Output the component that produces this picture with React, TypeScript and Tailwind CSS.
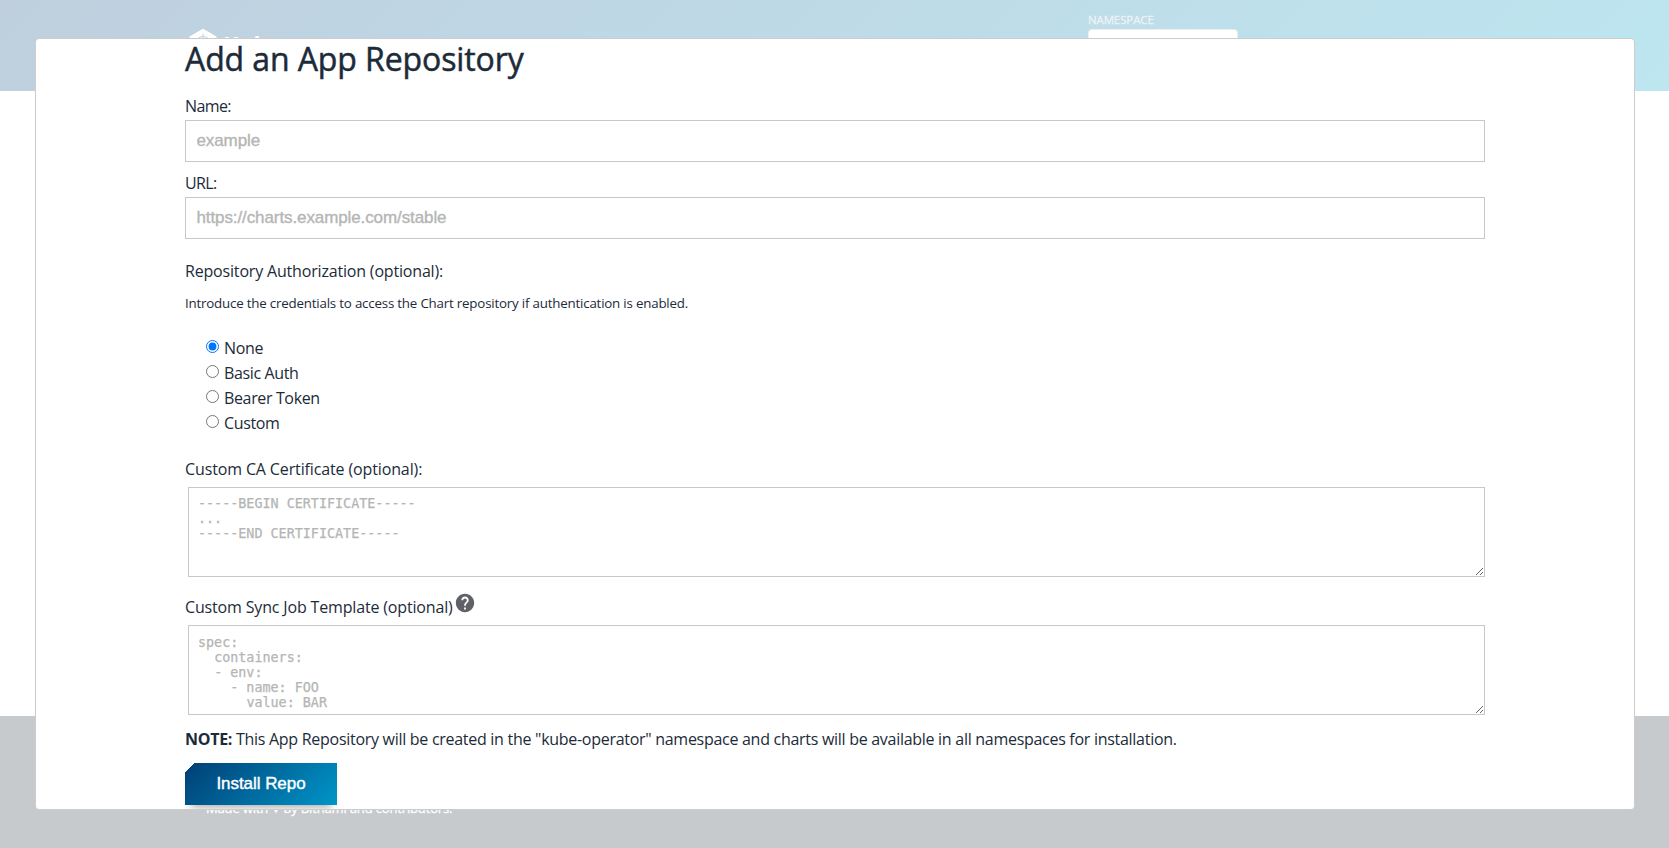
import { useState } from "react";
import type { ReactNode } from "react";
import { MdHelp } from "react-icons/md";

const AUTH_METHODS = ["None", "Basic Auth", "Bearer Token", "Custom"];

const CERT_HINT = "-----BEGIN CERTIFICATE-----\n...\n-----END CERTIFICATE-----";
const SYNC_HINT =
  "spec:\n  containers:\n  - env:\n    - name: FOO\n      value: BAR";

function Label({ className, children }: { className: string; children: ReactNode }) {
  return <div className={`flex h-6 text-[16px] leading-6 ${className}`}>{children}</div>;
}

function TextInput({ placeholder }: { placeholder: string }) {
  return (
    <input
      type="text"
      placeholder={placeholder}
      className="mt-0.5 block h-[42px] w-full border border-[#c8c8c8] bg-white px-[10.5px] font-['Liberation_Sans',Arial,sans-serif] text-[17px] tracking-[-0.1px] outline-none [-webkit-text-stroke:0.35px_#b4b6b4] placeholder:text-[#b4b6b4]"
    />
  );
}

function CodeArea({ placeholder, className }: { placeholder: string; className: string }) {
  return (
    <textarea
      placeholder={placeholder}
      className={`ml-[3px] block h-[90px] w-[1297px] overflow-hidden border border-[#c8c8c8] bg-white px-[9px] font-['DejaVu_Sans_Mono',monospace] text-[13.4px] leading-[15px] outline-none [-webkit-text-stroke:0.25px_#b4b6b4] placeholder:text-[#b4b6b4] ${className}`}
    />
  );
}

function PageHeader() {
  return (
    <header className="flex h-[91px] items-start justify-between bg-[linear-gradient(135deg,#bfcfde_0%,#bde6f0_100%)] pr-[431px] pl-[189px] text-white">
      <div className="flex pt-[28px]">
        <svg viewBox="0 0 28 32" className="h-8 w-7">
          <path d="M14 0.8 27.5 8.6v15L14 31.5 0.5 23.6v-15z" fill="#fff" />
          <g fill="none" stroke="#bfd2e1" strokeWidth="1">
            <circle cx="14" cy="16" r="7.5" />
            <path d="M14 5.5v21M5 11l18 10M5 21l18-10" />
          </g>
        </svg>
        <span className="mt-px ml-1.5 text-[23px] leading-8 font-bold">Kubeapps</span>
      </div>
      <div className="flex w-[150px] flex-col pt-3">
        <span className="text-[11.4px] leading-4 tracking-[-0.05px] text-[#eef3f5] [-webkit-text-stroke:0.3px_#eef3f5]">
          NAMESPACE
        </span>
        <div className="mt-px h-9 rounded border border-[#eeeeee] bg-white" />
      </div>
    </header>
  );
}

function PageFooter() {
  return (
    <footer className="h-[132px] bg-[#c7cacd] pt-[81px] pl-[206px] text-[13px] leading-5 tracking-[-0.15px] text-white [-webkit-text-stroke:0.3px_white]">
      Made with <span className="text-[15px]">♥</span> by Bitnami and contributors.
    </footer>
  );
}

function RepositoryForm() {
  const [auth, setAuth] = useState(AUTH_METHODS[0]);
  return (
    <form className="ml-[149px] w-[1300px]" onSubmit={(e) => e.preventDefault()}>
      <h1 className="text-[32px] leading-10 tracking-[-0.1px] [-webkit-text-stroke:0.5px_#1c2b39]">
        Add an App Repository
      </h1>

      <Label className="mt-[15px] tracking-[-0.6px]">Name:</Label>
      <TextInput placeholder="example" />
      <Label className="mt-[9px] tracking-[-0.6px]">URL:</Label>
      <TextInput placeholder="https://charts.example.com/stable" />

      <Label className="mt-5 tracking-[-0.18px]">Repository Authorization (optional):</Label>
      <p className="mt-2.5 text-[13.33px] leading-5 tracking-[-0.2px]">
        Introduce the credentials to access the Chart repository if authentication is enabled.
      </p>
      <div className="mt-[22px] ml-[21px] flex flex-col">
        {AUTH_METHODS.map((m) => (
          <label key={m} className="flex h-[25px] text-[16px] leading-[27px] tracking-[-0.36px]">
            <input
              type="radio"
              name="auth"
              checked={auth === m}
              onChange={() => setAuth(m)}
              className="mt-[5px] mr-[5px] h-[13px] w-[13px]"
            />
            {m}
          </label>
        ))}
      </div>

      <Label className="mt-[22px] tracking-[-0.13px]">Custom CA Certificate (optional):</Label>
      <CodeArea className="mt-1.5 pt-2" placeholder={CERT_HINT} />
      <Label className="mt-[18px] tracking-[-0.16px]">
        Custom Sync Job Template (optional)
        <MdHelp className="-mt-[3px] ml-px h-[22px] w-[22px] text-[#5f6167]" />
      </Label>
      <CodeArea className="mt-1.5 pt-[9px]" placeholder={SYNC_HINT} />

      <p className="mt-3 text-[16px] leading-6 tracking-[-0.284px]">
        <strong className="font-bold">NOTE:</strong> This App Repository will be created in the
        "kube-operator" namespace and charts will be available in all namespaces for installation.
      </p>
      <button className="mt-3 flex h-[42px] w-[152px] justify-center bg-[linear-gradient(135deg,transparent_6.4px,#004379_6.4px,#0095c8_100%)] pt-[9px] font-['Liberation_Sans',Arial,sans-serif] text-[17px] leading-6 tracking-[-0.05px] text-white shadow-[0_8px_8px_-6px_rgba(0,0,0,0.35)] [-webkit-text-stroke:0.4px_white]">
        Install Repo
      </button>
    </form>
  );
}

export default function App() {
  return (
    <div className="relative flex h-[848px] w-[1669px] flex-col justify-between overflow-hidden bg-white font-['Open_Sans','Noto_Sans',sans-serif] text-[#1c2b39]">
      <PageHeader />
      <PageFooter />
      <div
        role="dialog"
        className="absolute top-[38px] left-[35px] h-[772px] w-[1600px] overflow-hidden rounded border border-[#cccccc] bg-white"
      >
        <RepositoryForm />
      </div>
    </div>
  );
}
